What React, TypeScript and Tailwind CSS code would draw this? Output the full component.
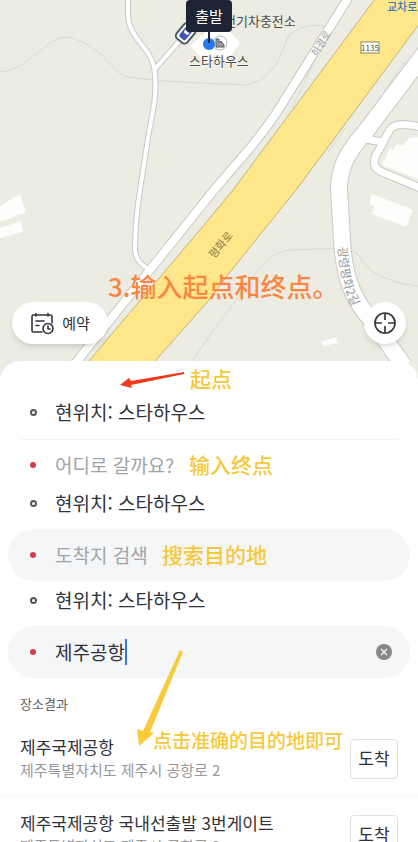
import { useState } from "react";

const RESULTS = [
  { name: "제주국제공항", address: "제주특별자치도 제주시 공항로 2" },
  { name: "제주국제공항 국내선출발 3번게이트", address: "제주특별자치도 제주시 공항로 2" },
];

const SMALL_ROADS = [
  "M128 -4 V16 Q129 28 136 37 L148 53 Q155 64 155 76 C157 96 152 116 149 132 L140 190 C136 215 135 235 135 250 Q136 263 149 269",
  "M155 69 L182 38",
];

const SIDE_ROAD = "M350 -5 L312 56 L277 112 Q268 126 250 148 L214 190 L150 270 L74 365";
const RIGHT_ROAD = "M430 46 L366 131 C346 154 339 168 339 190 L342 240 C344 280 355 302 372 321 L404 366";
const LOT_ROAD = "M366 139 L382 142 Q386 138 388 133 C392 124 400 122 425 128 M384 141 L376 155 Q371 168 382 172 L425 190";

function CityMap() {
  return (
    <svg
      viewBox="0 0 418 381"
      preserveAspectRatio="xMidYMin slice"
      className="block h-full w-full"
      fontFamily="'Noto Sans CJK KR', sans-serif"
    >
      <rect width="418" height="381" fill="#ecece3" />

      {/* contours */}
      <g fill="none" stroke="#d9d9cf" strokeWidth="1">
        <path d="M0 72 C22 71 34 53 52 42 Q66 32 82 42 C112 57 113 74 128 77 C160 82 205 83 246 85 C272 80 280 58 286 42 Q292 25 322 25 L332 31" />
        <path d="M192 361 L208 338 C228 310 250 282 258 270 Q272 252 290 250 L345 248 C360 250 360 262 372 271 Q390 283 418 286" />
        <path d="M320 50 L292 108 M404 62 L384 92 M345 128 L328 152" />
      </g>

      {/* buildings */}
      <g fill="#fdfdfb">
        <path d="M0 206 L20 194 L26 212 L0 222 Z" />
        <path d="M0 228 L21 221 L23 232 L0 238 Z" />
        <path d="M372 194 L380 197 L413 210 L406 227 L372 214 L374 206 L369 204 Z" />
        <path d="M321 342 L336 337 L338 343 L323 346 Z" />
        <path d="M382 165 L390 147 L393 151 L397 144 L402 146 L410 138 L418 137 V179 Z" />
      </g>

      {/* white roads with their casing */}
      <g fill="none" stroke="#c9cac8">
        <path d={LOT_ROAD} strokeWidth="9" />
        {SMALL_ROADS.map((d) => (
          <path key={d} d={d} strokeWidth="6" />
        ))}
        <path d={SIDE_ROAD} strokeWidth="10" />
        <path d={RIGHT_ROAD} strokeWidth="18" />
      </g>
      <g fill="none" stroke="#fff">
        <path d={LOT_ROAD} strokeWidth="7" />
        {SMALL_ROADS.map((d) => (
          <path key={d} d={d} strokeWidth="4" />
        ))}
        <path d={SIDE_ROAD} strokeWidth="8" />
        <path d={RIGHT_ROAD} strokeWidth="16" />
      </g>

      {/* highway */}
      <path
        d="M375 -1 L233 190 L210 218 L72 381 H138 L155 361 L210 299 L226 277 L296 190 L440 -4 Z"
        fill="#fee78a"
        stroke="#c4b37c"
        strokeWidth="1"
      />

      {/* road names */}
      <path id="side-name" d="M317 57 L335 27" fill="none" />
      <path id="highway-name" d="M214 259 L242 226" fill="none" />
      <path id="right-name" d="M338 247 C340 274 344 294 358 316" fill="none" />
      <text fontSize="10" fill="#99999b">
        <textPath href="#side-name">하광로</textPath>
      </text>
      <text fontSize="11" fill="#8d7a45">
        <textPath href="#highway-name">평화로</textPath>
      </text>
      <text fontSize="12" fill="#99999b">
        <textPath href="#right-name">광령평화2길</textPath>
      </text>
      <rect x="361" y="42" width="18" height="11" fill="#fffef4" stroke="#8c8468" />
      <text x="370" y="51" fontSize="8" textAnchor="middle" fill="#55503f">
        1135
      </text>
      <text x="387" y="11" fontSize="11" fontWeight="500" fill="#3d7cb5">
        교차로
      </text>

      {/* pickup place */}
      <path d="M190 46 L207 31 H229 L240 43 L227 61 H204 Z" fill="#fff" />
      <circle cx="220" cy="43" r="7" fill="#fff" stroke="#b5b5b8" />
      <path d="M216 47 V39 H219 V43 L221 41 L224 45 V47 Z" fill="#9a9ba0" stroke="#55565c" />
      <g transform="rotate(40 186 33)">
        <rect x="179" y="24" width="14" height="19" rx="4" fill="#fff" stroke="#4d5566" strokeWidth="2" />
        <rect x="182" y="27" width="8" height="13" rx="2" fill="#4153b8" />
        <path d="M183 31 H189 L188 34 H184 Z" fill="#fff" />
      </g>
      <text x="224" y="26" fontSize="13" fill="#4c4c4e">
        전기차충전소
      </text>
      <text x="189" y="66" fontSize="13" fill="#4c4c4e" stroke="#f6f6f0" strokeWidth="2" paintOrder="stroke">
        스타하우스
      </text>
      <circle cx="209" cy="44" r="6" fill="#2878ef" />
      <path d="M209 30 V43" stroke="#1d2739" strokeWidth="2" />
    </svg>
  );
}

function CalendarClockIcon() {
  return (
    <svg viewBox="0 0 24 24" className="h-6 w-6" fill="none" stroke="#34363c" strokeWidth="1.6" strokeLinecap="round" strokeLinejoin="round">
      <path d="M12 21 H3.5 A1.5 1.5 0 0 1 2 19.5 V5.5 A1.5 1.5 0 0 1 3.5 4 H20.5 A1.5 1.5 0 0 1 22 5.5 V12" />
      <path d="M6 2.5 V5 M18 2.5 V5 M6 10 H14 M6 14.5 H9" />
      <circle cx="18" cy="17.5" r="5" />
      <path d="M18 15 V18 H20" />
    </svg>
  );
}

function CrosshairIcon() {
  return (
    <svg viewBox="0 0 24 24" className="h-6 w-6" fill="none" stroke="#34363c" strokeWidth="1.7">
      <circle cx="12" cy="12" r="10" />
      <path d="M12 2 V9 M12 15 V22 M2 12 H9 M15 12 H22" />
    </svg>
  );
}

function CurrentPlace() {
  return (
    <>
      <span className="mr-[18px] ml-[30px] h-[7px] w-[7px] shrink-0 rounded-full border-2 border-[#55575d]" />
      <p>현위치: 스타하우스</p>
    </>
  );
}

function RedDot() {
  return <span className="h-[6px] w-[6px] shrink-0 rounded-full bg-[#d33c44]" />;
}

function Note({ children }: { children: string }) {
  return (
    <span lang="zh" className="pb-[3px] font-['Noto_Sans_CJK_SC',sans-serif] text-[21px] leading-6 font-medium whitespace-nowrap text-[#f5c93b]">
      {children}
    </span>
  );
}

export default function App() {
  const [query, setQuery] = useState("제주공항");

  return (
    <main
      lang="ko"
      className="relative flex h-screen flex-col overflow-hidden bg-white font-['Noto_Sans_CJK_KR',sans-serif] text-[#303238]"
    >
      {/* Map */}
      <section className="relative h-[381px] shrink-0 overflow-hidden">
        <CityMap />
        <div className="absolute top-0 left-1/2 -ml-[23px] flex h-8 w-[46px] items-center justify-center rounded-sm bg-[#1d2535] text-[15px] text-white">
          출발
        </div>
        <p
          lang="zh"
          className="absolute top-[268px] left-[108px] font-['Noto_Sans_CJK_SC',sans-serif] text-[26px] leading-9 font-medium whitespace-nowrap text-[#f98742]"
        >
          3.输入起点和终点。
        </p>
        <button className="absolute top-[302px] left-3 flex h-[42px] w-24 items-center justify-center gap-2 rounded-full bg-white text-[15px] shadow-md">
          <CalendarClockIcon />
          예약
        </button>
        <button
          aria-label="내 위치"
          className="absolute top-[302px] right-3 flex h-[42px] w-[42px] items-center justify-center rounded-full bg-white shadow-md"
        >
          <CrosshairIcon />
        </button>
      </section>

      {/* Bottom sheet */}
      <section className="relative -mt-5 shrink-0 rounded-t-[20px] bg-white text-[19px]">
        <div className="flex h-[78px] items-center pt-[25px]">
          <CurrentPlace />
        </div>
        <div className="absolute top-[5px] left-[190px] flex">
          <Note>起点</Note>
        </div>
        <svg viewBox="0 0 66 18" className="absolute top-[9px] left-[119px] h-[18px] w-[66px]">
          <path d="M65 2 L12 11 L10 8 L1 15 L13 18 L12 15 L65 4 Z" fill="#ef3b1c" />
        </svg>

        <div className="mx-5 border-t border-[#f4f4f5]" />
        <label className="flex h-[50px] items-center pl-[30px]">
          <RedDot />
          <input
            aria-label="목적지"
            placeholder="어디로 갈까요?"
            className="mr-[2px] ml-[19px] w-[132px] outline-none placeholder:text-[#a2a3a6]"
          />
          <Note>输入终点</Note>
        </label>
        <div className="mb-[12px] flex h-[27px] items-center">
          <CurrentPlace />
        </div>

        <label className="mx-2 flex h-[52px] items-center rounded-full bg-[#f4f6f8] pl-[22px]">
          <RedDot />
          <input
            aria-label="도착지"
            placeholder="도착지 검색"
            className="ml-[19px] w-[107px] outline-none placeholder:text-[#a2a3a6]"
          />
          <Note>搜索目的地</Note>
        </label>
        <div className="mb-[7px] flex h-[38px] items-center">
          <CurrentPlace />
        </div>

        <div className="mx-2 flex h-[52px] items-center rounded-full bg-[#f4f6f8] pr-[18px] pl-[22px]">
          <RedDot />
          <input
            aria-label="도착지 검색어"
            value={query}
            onChange={(e) => setQuery(e.target.value)}
            className="ml-[19px] field-sizing-content caret-[#3577e8] outline-none"
          />
          <span className="h-[26px] w-[2px] bg-[#3577e8]" />
          <button
            aria-label="지우기"
            onClick={() => setQuery("")}
            className="ml-auto flex h-4 w-4 items-center justify-center rounded-full bg-[#858789]"
          >
            <svg viewBox="0 0 8 8" className="h-2 w-2" stroke="#fff" strokeWidth="1.2">
              <path d="M1 1 L7 7 M7 1 L1 7" />
            </svg>
          </button>
        </div>

        <h2 className="px-5 pt-[15px] pb-[6px] text-[13px] leading-[22px] text-[#5d5f64]">장소결과</h2>
        <ul>
          {RESULTS.map((r) => (
            <li key={r.name} className="flex h-[76px] items-center justify-between border-b border-[#f7f7f8] px-5">
              <div className="pb-[2px] whitespace-nowrap">
                <p className="text-[17px] leading-[23px]">{r.name}</p>
                <p className="text-[15px] leading-[23px] text-[#98999d]">{r.address}</p>
              </div>
              <button className="h-10 w-12 rounded-sm border border-[#dfe0e3] bg-white pb-[2px] text-[17px]">도착</button>
            </li>
          ))}
        </ul>

        {/* Pointer to the first result */}
        <svg viewBox="0 0 48 98" className="absolute top-[288px] left-[136px] h-[98px] w-12">
          <path d="M44 1 L47 3 L14 83 L18 84 L3 97 L1 80 L7 82 Z" fill="#f8ca3c" />
        </svg>
        <p
          lang="zh"
          className="absolute top-[365px] left-[153px] font-['Noto_Sans_CJK_SC',sans-serif] leading-7 font-medium whitespace-nowrap text-[#f5c93b]"
        >
          点击准确的目的地即可
        </p>
      </section>
    </main>
  );
}
